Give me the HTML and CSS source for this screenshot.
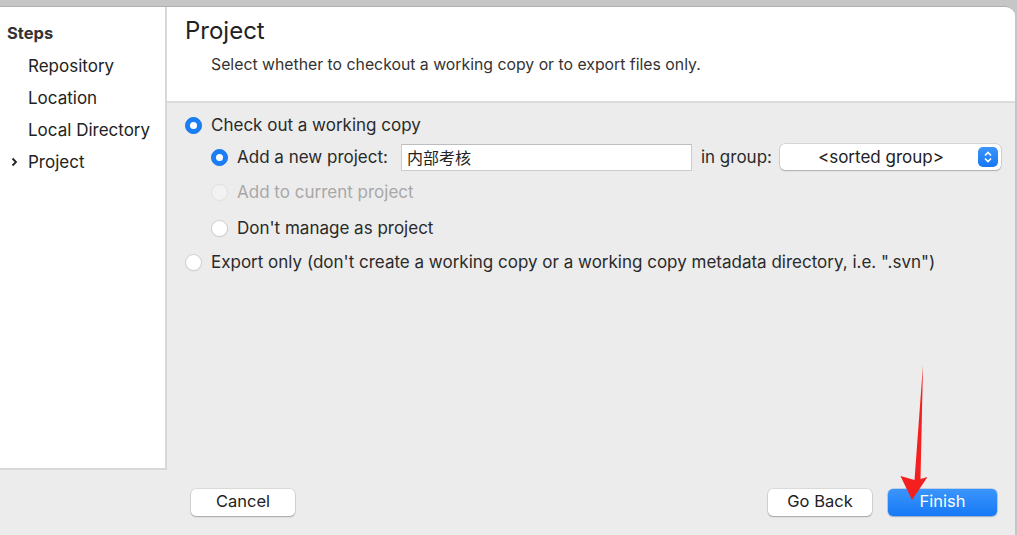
FILE: index.html
```html
<!DOCTYPE html>
<html>
<head>
<meta charset="utf-8">
<link rel="stylesheet" href="styles.css">
</head>
<body>
<div class="window">
  <div class="main">
    <aside class="sidebar">
      <div class="steps-title">Steps</div>
      <ul class="steps">
        <li>Repository</li>
        <li>Location</li>
        <li>Local Directory</li>
        <li class="current"><svg class="chev" width="7" height="10" viewBox="0 0 7 10"><polyline points="1.5,1.5 5,5 1.5,8.5" fill="none" stroke="#222" stroke-width="1.8"/></svg>Project</li>
      </ul>
    </aside>
    <section class="content">
      <header class="header">
        <h1 class="title">Project</h1>
        <p class="subtitle">Select whether to checkout a working copy or to export files only.</p>
      </header>
      <div class="options">
        <div class="row row-1"><span class="radio on"></span><span>Check out a working copy</span></div>
        <div class="row row-2 indent">
          <span class="radio on"></span><span class="label">Add a new project:</span>
          <div class="field">内部考核</div>
          <span class="label group-label">in group:</span>
          <div class="select"><span class="select-text">&lt;sorted group&gt;</span><span class="stepper"><svg width="10" height="14" viewBox="0 0 10 14"><polyline points="2,5.5 5,2.5 8,5.5" fill="none" stroke="#fff" stroke-width="1.6"/><polyline points="2,8.5 5,11.5 8,8.5" fill="none" stroke="#fff" stroke-width="1.6"/></svg></span></div>
        </div>
        <div class="row row-3 indent disabled"><span class="radio off-disabled"></span><span>Add to current project</span></div>
        <div class="row row-4 indent"><span class="radio"></span><span>Don't manage as project</span></div>
        <div class="row row-5"><span class="radio"></span><span>Export only (don't create a working copy or a working copy metadata directory, i.e. ".svn")</span></div>
      </div>
    </section>
  </div>
  <footer class="footer">
    <button class="btn cancel">Cancel</button>
    <div class="right-btns">
      <button class="btn">Go Back</button>
      <button class="btn primary">Finish</button>
    </div>
  </footer>
  <svg class="arrow" width="40" height="140" viewBox="895 362 40 140"><polygon points="923,364 920.5,478 927.5,476 912,499 900.5,475 914.5,479" fill="#f41f1f"/></svg>
</div>
</body>
</html>
```
FILE: styles.css
```css
* { box-sizing: border-box; }
html, body { margin: 0; padding: 0; }
body {
  background: #c6c6c6;
  padding-top: 6px;
  font-family: "Inter", "Liberation Sans", "Noto Sans CJK SC", sans-serif;
  color: #222;
  width: 1017px;
  height: 535px;
  overflow: hidden;
}
.window {
  position: relative;
  width: 1015px;
  height: 529px;
  background: #ececec;
  border-top-right-radius: 10px;
  border-top: 1px solid #b0b0b0;
  display: flex;
  flex-direction: column;
  overflow: hidden;
}
.main {
  display: flex;
  height: 463px;
}
.sidebar {
  width: 167px;
  background: #fff;
  border-right: 2px solid #d8d8d8;
  border-bottom: 2px solid #d8d8d8;
  padding: 15px 0 0 7px;
}
.steps-title {
  font-weight: 700;
  font-size: 16.5px;
  color: #333;
  height: 22px;
  line-height: 22px;
}
.steps {
  list-style: none;
  margin: 6px 0 0;
  padding: 0 0 0 21px;
}
.steps li {
  font-size: 17px;
  height: 32px;
  line-height: 32px;
  color: #222;
  position: relative;
}
.chev {
  position: absolute;
  left: -17px;
  top: 11px;
}
.content {
  flex: 1;
  display: flex;
  flex-direction: column;
}
.header {
  background: #fff;
  height: 96px;
  border-bottom: 2px solid #dcdcdc;
  padding: 9px 0 0 18px;
}
.title {
  margin: 0;
  font-weight: 400;
  font-size: 24px;
  line-height: 30px;
  color: #222;
}
.subtitle {
  margin: 9px 0 0 26px;
  font-size: 15.8px;
  line-height: 20px;
  color: #333;
}
.options {
  padding: 11px 0 0 18px;
  font-size: 17px;
  color: #2a2a2a;
}
.row {
  display: flex;
  align-items: center;
  height: 22px;
}
.row .radio { margin-right: 9px; }
.indent { padding-left: 26px; }
.row-2 { height: 28px; margin-top: 7px; }
.row-3 { margin-top: 10px; }
.row-4 { margin-top: 14px; }
.row-5 { margin-top: 12px; }
.disabled { color: #a8a8a8; }
.radio {
  width: 17px;
  height: 17px;
  border-radius: 50%;
  background: #fff;
  border: 1px solid #cfcfcf;
  box-shadow: 0 0.5px 1px rgba(0,0,0,0.08);
  flex: none;
  display: inline-block;
  position: relative;
}
.radio.on {
  background: #1a7ff6;
  border-color: #1677ee;
}
.radio.on::after {
  content: "";
  position: absolute;
  left: 50%;
  top: 50%;
  width: 7px;
  height: 7px;
  margin: -3.5px 0 0 -3.5px;
  border-radius: 50%;
  background: #fff;
}
.radio.off-disabled {
  background: #f2f2f2;
  border-color: #e0e0e0;
  box-shadow: none;
}
.label { margin-right: 13px; }
.field {
  width: 291px;
  height: 27px;
  background: #fff;
  border: 1px solid #cbcbcb;
  border-top-color: #bdbdbd;
  font-family: "Noto Sans CJK SC", sans-serif;
  font-size: 16px;
  line-height: 25px;
  padding-left: 5px;
  color: #222;
  flex: none;
}
.group-label { margin-left: 9px; margin-right: 8px; }
.select {
  width: 221px;
  height: 26px;
  background: #fff;
  border-radius: 5px;
  box-shadow: 0 0 0 0.5px rgba(0,0,0,0.18), 0 1px 1.5px rgba(0,0,0,0.2);
  display: flex;
  align-items: center;
  justify-content: space-between;
  padding: 0 3px 0 0;
  flex: none;
}
.select-text {
  flex: 1;
  text-align: center;
  padding-left: 4px;
  color: #222;
}
.stepper {
  width: 20px;
  height: 20px;
  border-radius: 5px;
  background: linear-gradient(#3b95fb, #1677f4);
  display: flex;
  align-items: center;
  justify-content: center;
}
.footer {
  flex: 1;
  display: flex;
  justify-content: space-between;
  align-items: flex-start;
  padding: 19px 18px 0 191px;
}
.right-btns { display: flex; gap: 16px; }
.btn {
  font-family: inherit;
  font-size: 16.5px;
  line-height: 25px;
  color: #222;
  background: #fff;
  border: none;
  border-radius: 5px;
  height: 27px;
  width: 104px;
  padding: 0 0 2px;
  box-shadow: 0 0 0 0.5px rgba(0,0,0,0.15), 0 1px 1.5px rgba(0,0,0,0.25);
}
.btn.primary {
  width: 109px;
  color: #fff;
  background: linear-gradient(#3b95fb, #1679f6);
  box-shadow: 0 0 0 0.5px rgba(0,90,220,0.4), 0 1px 1.5px rgba(0,0,0,0.2);
}
.arrow {
  position: absolute;
  left: 895px;
  top: 356px;
}
```
